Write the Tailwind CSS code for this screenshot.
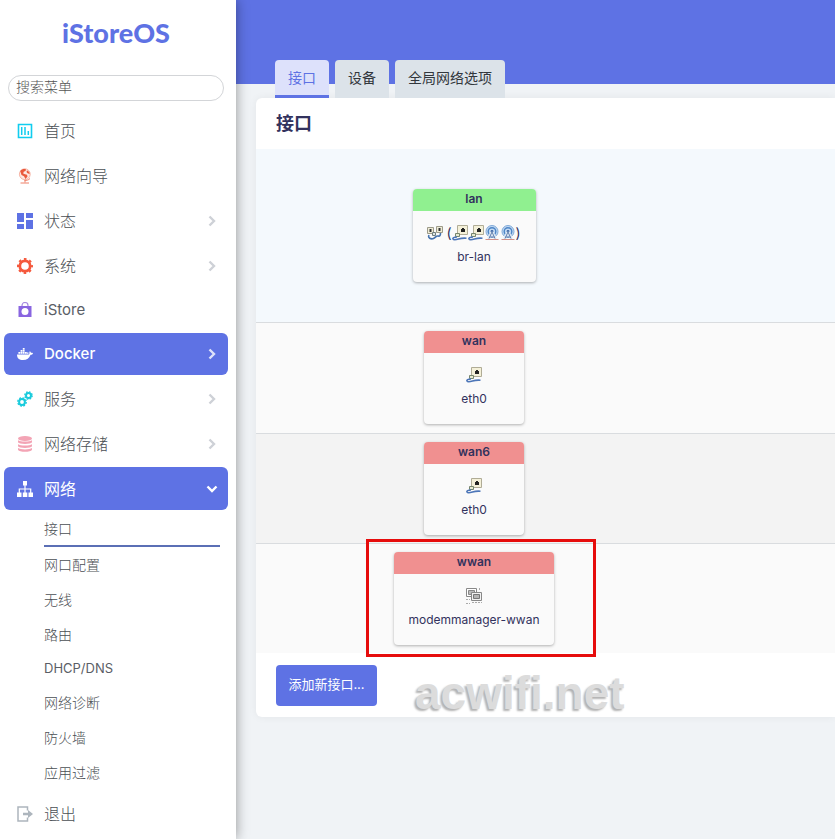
<!DOCTYPE html>
<html lang="zh-CN">

<head>
  <meta charset="UTF-8">
  <meta name="viewport" content="width=device-width, initial-scale=1.0">
  <title>iStoreOS - 接口</title>
  <script src="https://cdn.jsdelivr.net/npm/@tailwindcss/browser@4"></script>
</head>

<body class="min-h-screen flex overflow-hidden bg-[#f0f3f6] text-sm text-[#525f7f] font-['Inter','Noto_Sans_CJK_SC',sans-serif]">

  <!-- icons used more than once -->
  <svg class="hidden">
    <symbol id="chevron" viewBox="0 0 10 12">
      <path d="M2.500 1.500L7 6l-4.500 4.500" fill="none" stroke="currentColor" stroke-width="2.400" />
    </symbol>
    <symbol id="port" viewBox="0 0 16 16">
      <path d="M5.500 .5h10v9h-10z" fill="#f4f0d8" stroke="#b0ac96" />
      <path d="M9 4h1V3h2v1h1v3H9z" fill="#222" />
      <path d="M3.500 8.500h4v3h-4z" fill="#e7ead0" stroke="#77856d" />
      <path d="M5 12c-3 0-4.500 1-4 2s3 .8 5.500 0 4-1.200 8-.8" fill="none" stroke="#4d76b8" stroke-width="1.600" />
    </symbol>
    <symbol id="wifi" viewBox="0 0 16 16">
      <circle cx="8" cy="6.500" r="6" fill="#c3daf2" stroke="#7fa9d8" />
      <circle cx="8" cy="6.500" r="3.800" fill="none" stroke="#4d85c6" stroke-width="1.400" />
      <circle cx="8" cy="6.500" r="1.500" fill="#28569c" />
      <path d="M8 7l-3.500 7M8 7l3.500 7" stroke="#e4ecf5" stroke-width="3" fill="none" />
      <path d="M8 7l-3 6.500M8 7l3 6.500M5.500 12h5" stroke="#5f7fae" fill="none" />
      <path d="M1.500 14.500h13" stroke="#d29188" />
    </symbol>
    <symbol id="bridge" viewBox="0 0 16 16">
      <path d="M.5 2.500h6v6h-6zM9.500 1.500h6v6h-6z" fill="#eeebd6" stroke="#9d9b89" />
      <path d="M2.500 4h2v3h-2zM11.500 3h2v3h-2z" fill="#333" />
      <path d="M5.500 7.500h3v3h-3z" fill="#dfe5df" stroke="#6e7e80" />
      <path d="M2 10c-1.500 3 2 4.500 4.500 3.500S9 10.500 11 11s2.500-1 2.500-3" fill="none" stroke="#4673ae" stroke-width="1.600" />
    </symbol>
  </svg>

  <aside class="relative z-10 w-[236px] shrink-0 bg-white shadow-[0_0_12px_rgba(0,0,0,0.4)]">
    <a href="#" class="flex h-[75px] items-center justify-center pr-1 pb-2 text-[27px] font-black text-[#5e72e4] font-['Lato',sans-serif]">iStoreOS</a>
    <input type="text" aria-label="搜索菜单" placeholder="搜索菜单" class="mx-2 block h-[26px] w-[220px] max-w-[216px] rounded-full border border-[#d3d5d8] bg-white px-[7px] pb-1 text-sm font-light placeholder:text-[#555] outline-none">

    <nav class="mt-2 flex flex-col gap-[2px] pr-2 pl-1 text-base font-light text-[#4b4f54]">
      <a href="#" class="flex h-[43px] items-center rounded-md pr-[11px] pl-[13px]">
        <svg class="mr-[11px] size-4 text-[#11cdef]" viewBox="0 0 16 16">
          <path d="M1.500 1.500h13v13h-13z" fill="none" stroke="currentColor" stroke-width="1.600" />
          <path d="M4.700 4v8M8 4v8M11.300 8v4" stroke="currentColor" stroke-width="1.500" />
        </svg>
        首页
      </a>
      <a href="#" class="flex h-[43px] items-center rounded-md pr-[11px] pl-[13px]">
        <svg class="mr-[11px] size-4" viewBox="0 0 16 16">
          <circle cx="7.800" cy="6.200" r="5.400" fill="#fde8e2" stroke="#f4a391" stroke-width=".8" />
          <path d="M3.200 3C5 1 7.500.7 9 1.500L8.500 3l-1.800.7-.5 1.800L8 6.300l2 .5.500 1.700-2 2.500L7 8.300 4.500 7zM10 2.200l2.200 1.800.5 2-2.200-.7-1-1.300z" fill="#e9593c" />
          <path d="M8 12v2.500M3.500 15h8.500M13 10.500c-1.500 1.700-3.500 2-5.500 1.800" fill="none" stroke="#ee8069" />
        </svg>
        网络向导
      </a>
      <a href="#" class="flex h-[43px] items-center rounded-md pr-[11px] pl-[13px]">
        <svg class="mr-[11px] size-4" viewBox="0 0 16 16" fill="#5e72e4">
          <path d="M0 0h7v9H0zM9 0h7v5H9zM0 11h7v5H0zM9 7h7v9H9z" />
        </svg>
        状态
        <svg class="ml-auto h-3 w-[10px] text-[#ced1d7]"><use href="#chevron" /></svg>
      </a>
      <a href="#" class="flex h-[43px] items-center rounded-md pr-[11px] pl-[13px]">
        <svg class="mr-[11px] size-4 text-[#f5593d]" viewBox="0 0 16 16">
          <circle cx="8" cy="8" r="5.200" fill="none" stroke="currentColor" stroke-width="2.800" />
          <circle cx="8" cy="8" r="7" fill="none" stroke="currentColor" stroke-width="2" stroke-dasharray="2.600 2.898" stroke-dashoffset="1.300" />
        </svg>
        系统
        <svg class="ml-auto h-3 w-[10px] text-[#ced1d7]"><use href="#chevron" /></svg>
      </a>
      <a href="#" class="flex h-[42px] items-center rounded-md pr-[11px] pl-[13px] text-[15px] font-normal text-[#5a5e66]">
        <svg class="mr-[11px] size-4" viewBox="0 0 16 16">
          <path d="M5 5V3.500a3 3 0 0 1 6 0V5" fill="none" stroke="#a78be0" stroke-width="1.200" />
          <path d="M1.500 4h13v11h-13z" fill="#8965e0" />
          <circle cx="8" cy="9.500" r="3.500" fill="#fff" />
        </svg>
        iStore
      </a>
      <a href="#" class="flex h-[42px] items-center rounded-md bg-[#5e72e4] pr-[11px] pl-[13px] text-[15px] font-medium text-white">
        <svg class="mr-[11px] size-4" viewBox="0 0 16 16" fill="currentColor">
          <path d="M0 8.500h11.500c.8 0 1-.7.900-1.500-.1-.7 0-1.200.5-1.800.7.500 1 1 1.100 1.700.7-.1 1.400 0 2 .3-.4 1-1.100 1.500-2.400 1.500C12.200 12 10 14 6 14 2.200 14 0 12.300 0 8.500z" />
          <path d="M1.400 6h1.800v1.800H1.400zM3.600 6h1.800v1.800H3.600zM5.800 6h1.800v1.800H5.800zM8 6h1.800v1.800H8zM3.600 4h1.800v1.700H3.600zM5.800 4h1.800v1.700H5.800zM5.800 2h1.800v1.700H5.800zM10 6.500h1.500v1.300H10z" />
        </svg>
        Docker
        <svg class="ml-auto h-3 w-[10px] text-[#dfe3fa]"><use href="#chevron" /></svg>
      </a>
      <a href="#" class="flex h-[43px] items-center rounded-md pr-[11px] pl-[13px]">
        <svg class="mr-[11px] size-4 text-[#19cbdc]" viewBox="0 0 16 16" fill="none" stroke="currentColor">
          <circle cx="5" cy="11" r="2.900" stroke-width="2" />
          <circle cx="5" cy="11" r="4.200" stroke-width="1.400" stroke-dasharray="1.800 1.500" />
          <circle cx="11.500" cy="4.500" r="2.500" stroke-width="2" />
          <circle cx="11.500" cy="4.500" r="3.700" stroke-width="1.300" stroke-dasharray="1.600 1.305" />
        </svg>
        服务
        <svg class="ml-auto h-3 w-[10px] text-[#ced1d7]"><use href="#chevron" /></svg>
      </a>
      <a href="#" class="flex h-[43px] items-center rounded-md pr-[11px] pl-[13px]">
        <svg class="mr-[11px] size-4" viewBox="0 0 16 16" fill="#f3a4b5">
          <ellipse cx="8" cy="2.600" rx="7" ry="2.500" />
          <path d="M1 4.200c2 1.800 12 1.800 14 0v2c-1 2.300-13 2.300-14 0zM1 8.200c2 1.800 12 1.800 14 0v2c-1 2.300-13 2.300-14 0zM1 12.100c2 1.800 12 1.800 14 0v1.700c-1 2.700-13 2.700-14 0z" />
        </svg>
        网络存储
        <svg class="ml-auto h-3 w-[10px] text-[#ced1d7]"><use href="#chevron" /></svg>
      </a>
      <a href="#" class="flex h-[43px] items-center rounded-md bg-[#5e72e4] pr-[11px] pl-[13px] font-normal text-white">
        <svg class="mr-[11px] size-4" viewBox="0 0 16 16">
          <path d="M6 0h4v4.500H6zM0 11.500h4.500V16H0zM5.800 11.500h4.500V16H5.800zM11.500 11.500H16V16h-4.500z" fill="currentColor" />
          <path d="M8 4v8M2.300 12V8h11.400v4" fill="none" stroke="currentColor" stroke-width="1.200" />
        </svg>
        网络
        <svg class="ml-auto h-3 w-[10px] rotate-90 text-white"><use href="#chevron" /></svg>
      </a>

      <div class="flex flex-col pr-2 pl-10 text-sm">
        <a href="#" class="flex h-[35px] items-center border-b-2 border-[#5b6fb5]">接口</a>
        <a href="#" class="flex h-[35px] items-center">网口配置</a>
        <a href="#" class="flex h-[35px] items-center">无线</a>
        <a href="#" class="flex h-[35px] items-center">路由</a>
        <a href="#" class="flex h-[33px] items-center text-[13px] font-normal text-[#5a5e66]">DHCP/DNS</a>
        <a href="#" class="flex h-[35px] items-center">网络诊断</a>
        <a href="#" class="flex h-[35px] items-center">防火墙</a>
        <a href="#" class="flex h-[35px] items-center">应用过滤</a>
      </div>

      <a href="#" class="flex h-[43px] items-center rounded-md pr-[11px] pl-[13px]">
        <svg class="mr-[11px] size-4" viewBox="0 0 16 16">
          <path d="M10.500 4.500V1H1v14h9.500v-3.500" fill="none" stroke="#adb5bd" stroke-width="1.500" />
          <path d="M6 6.800h5V4l5 4-5 4V9.300H6z" fill="#adb5bd" />
        </svg>
        退出
      </a>
    </nav>
  </aside>

  <main class="min-w-0 flex-1">
    <header class="h-[84px] bg-[#5e72e4] pt-[60px] pl-[39px]">
      <nav class="flex gap-[6px] text-[#32373c]">
        <a href="#" class="flex h-[38px] items-center rounded-t border-b-3 border-[#5e72e4] bg-[#dde1fb] px-[13px] text-[#5e72e4]">接口</a>
        <a href="#" class="flex h-[38px] items-center rounded-t bg-[#dce3e9] px-[13px] pb-[3px]">设备</a>
        <a href="#" class="flex h-[38px] items-center rounded-t bg-[#dce3e9] px-[13px] pb-[3px]">全局网络选项</a>
      </nav>
    </header>

    <section class="mt-[14px] ml-5 rounded-l-md bg-white shadow-[0_0_8px_rgba(0,0,0,0.06)]">
      <h1 class="flex h-[51px] items-center px-5 text-lg font-bold text-[#32325d]">接口</h1>

      <table class="w-full border-collapse text-center text-xs text-[#32325d]">
        <tbody>
          <tr class="border-b border-[#d9dcdf] bg-[#f4f9fd]">
            <td class="h-[173px] w-[436px]">
              <div class="mx-auto h-[93px] w-[123px] overflow-hidden rounded bg-[#fafafa] shadow-[0_1px_3px_rgba(0,0,0,0.3)]">
                <div class="h-[22px] bg-[#90f090] leading-[20px] font-semibold">lan</div>
                <div class="mt-[14px] flex h-4 items-center justify-center">
                  <svg class="mr-[3px] size-4"><use href="#bridge" /></svg>
                  <span class="text-sm">(</span>
                  <svg class="size-4"><use href="#port" /></svg>
                  <svg class="size-4"><use href="#port" /></svg>
                  <svg class="size-4"><use href="#wifi" /></svg>
                  <svg class="size-4"><use href="#wifi" /></svg>
                  <span class="text-sm">)</span>
                </div>
                <div class="mt-[6px] leading-[20px]">br-lan</div>
              </div>
            </td>
            <td></td>
          </tr>
          <tr class="border-b border-[#d9dcdf] bg-[#fafafa]">
            <td class="h-[111px]">
              <div class="mx-auto h-[93px] w-[100px] overflow-hidden rounded bg-[#fafafa] shadow-[0_1px_3px_rgba(0,0,0,0.3)]">
                <div class="h-[22px] bg-[#f09090] leading-[20px] font-semibold">wan</div>
                <svg class="mx-auto mt-[14px] size-4"><use href="#port" /></svg>
                <div class="mt-[6px] leading-[20px]">eth0</div>
              </div>
            </td>
            <td></td>
          </tr>
          <tr class="border-b border-[#d9dcdf] bg-[#f3f3f3]">
            <td class="h-[110px]">
              <div class="mx-auto h-[93px] w-[100px] overflow-hidden rounded bg-[#fafafa] shadow-[0_1px_3px_rgba(0,0,0,0.3)]">
                <div class="h-[22px] bg-[#f09090] leading-[20px] font-semibold">wan6</div>
                <svg class="mx-auto mt-[14px] size-4"><use href="#port" /></svg>
                <div class="mt-[6px] leading-[20px]">eth0</div>
              </div>
            </td>
            <td></td>
          </tr>
          <tr class="bg-[#fafafa]">
            <td class="relative h-[110px]">
              <div class="absolute top-[-5px] left-[110px] h-[118px] w-[230px] border-3 border-[#e60c0c]"></div>
              <div class="mx-auto h-[93px] w-[160px] overflow-hidden rounded bg-[#fafafa] shadow-[0_1px_3px_rgba(0,0,0,0.3)]">
                <div class="h-[22px] bg-[#f09090] leading-[20px] font-semibold">wwan</div>
                <svg class="mx-auto mt-[14px] size-4" viewBox="0 0 16 16">
                  <path d="M.5 .5h10v8H.5z" fill="#fff" stroke="#888" />
                  <path d="M2.500 2.500h6v4h-6z" fill="#bbb" stroke="#888" />
                  <path d="M5.500 4.500h10v8h-10z" fill="#f2f2f2" stroke="#888" />
                  <path d="M7.500 6.500h6v4h-6z" fill="#b5b5b5" stroke="#777" />
                  <path d="M13.500 0v3M0 11.500h4M0 15.500h4M6 14.500h10" stroke="#aaa" stroke-dasharray="2 1" />
                </svg>
                <div class="mt-[6px] leading-[20px]">modemmanager-wwan</div>
              </div>
            </td>
            <td></td>
          </tr>
        </tbody>
      </table>

      <div class="flex h-[64px] items-center px-5">
        <button type="button" class="h-[41px] w-[101px] rounded bg-[#5e72e4] pb-[2px] text-[13px] whitespace-nowrap text-white">添加新接口...</button>
        <span class="ml-[38px] pt-4 text-[46px] leading-[48px] font-bold text-[#dcdcdc] font-['Liberation_Sans',sans-serif] text-shadow-[-2px_2px_2px_rgba(0,0,0,0.3)]">acwifi.net</span>
      </div>
    </section>
  </main>

</body>

</html>
